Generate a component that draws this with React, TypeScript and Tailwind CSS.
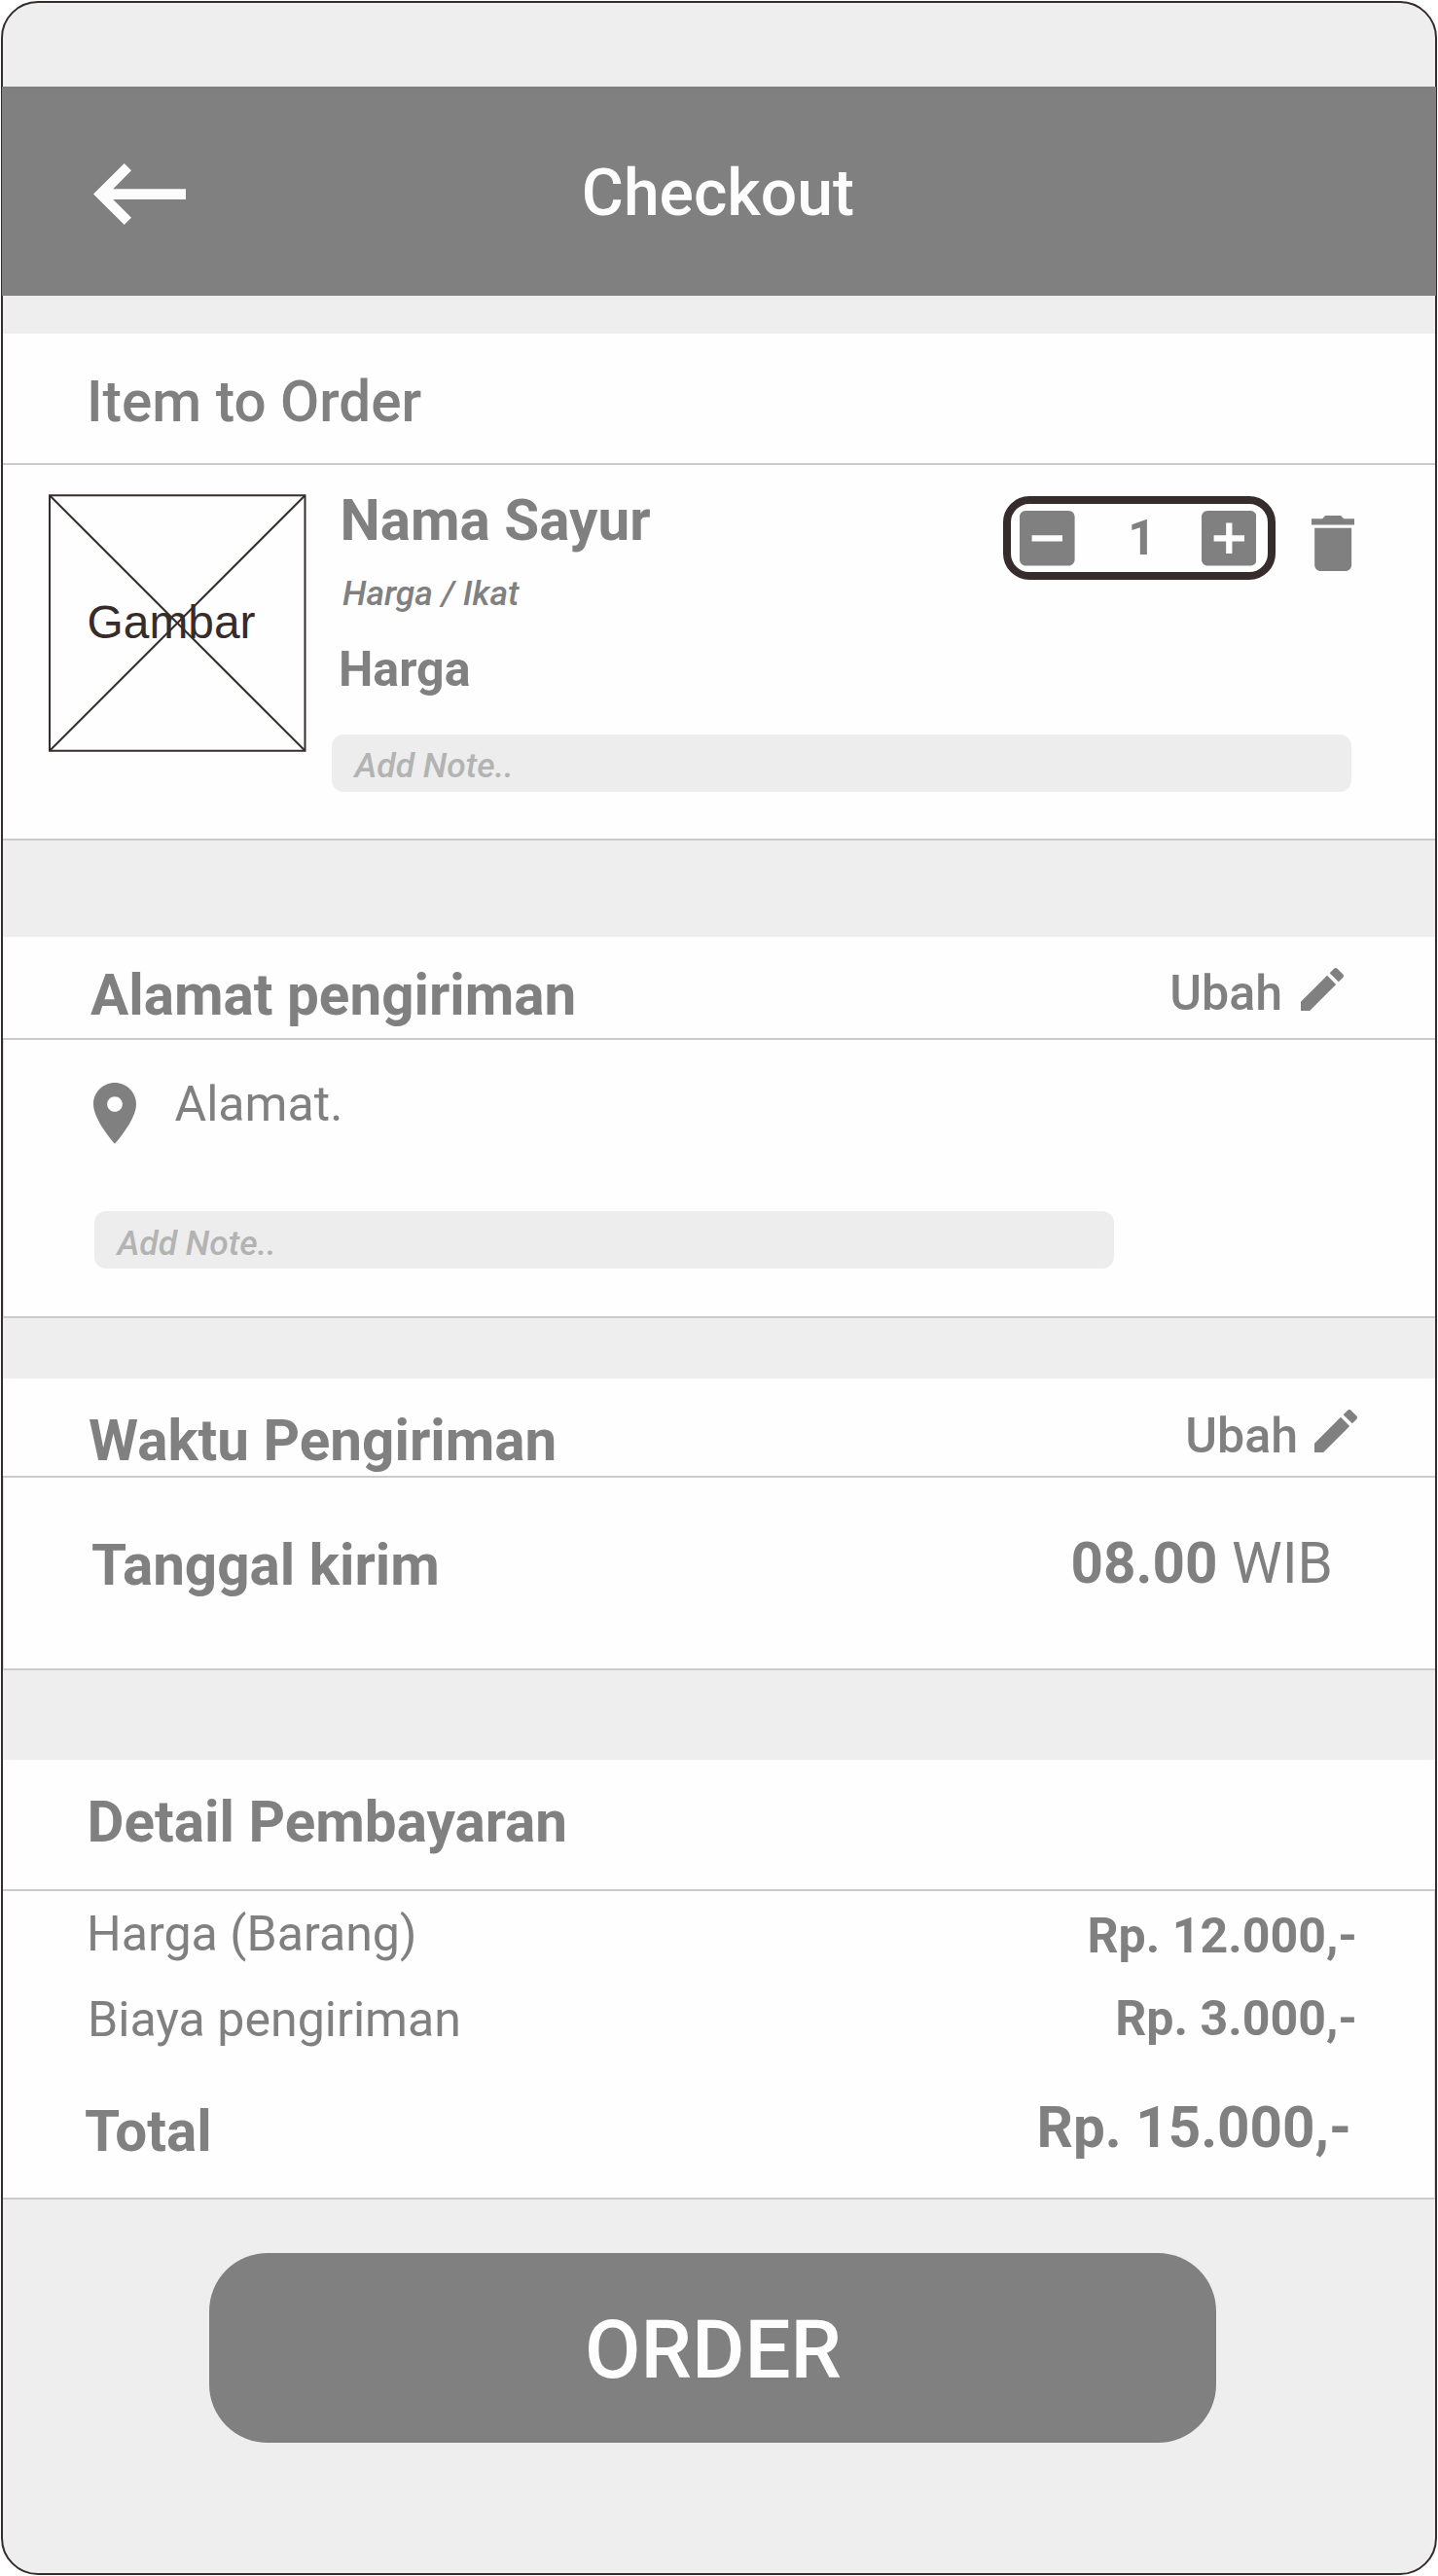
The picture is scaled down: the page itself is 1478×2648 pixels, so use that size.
import type { ReactNode } from 'react';

function Icon({ d, box, className }: { d: string; box: string; className: string }) {
  return (
    <svg viewBox={box} className={`block shrink-0 fill-[#808080] ${className}`} aria-hidden="true">
      <path d={d} />
    </svg>
  );
}

const MINUS_BOX =
  'M19 3H5c-1.1 0-2 .9-2 2v14c0 1.1.9 2 2 2h14c1.1 0 2-.9 2-2V5c0-1.1-.9-2-2-2zm-2 10H7v-2h10v2z';
const PLUS_BOX =
  'M19 3H5c-1.1 0-2 .9-2 2v14c0 1.1.9 2 2 2h14c1.1 0 2-.9 2-2V5c0-1.1-.9-2-2-2zm-2 10h-4v4h-2v-4H7v-2h4V7h2v4h4v2z';
const TRASH = 'M6 19c0 1.1.9 2 2 2h8c1.1 0 2-.9 2-2V7H6v12zM19 4h-3.5l-1-1h-5l-1 1H5v2h14V4z';
const PENCIL =
  'M3 17.25V21h3.75L17.81 9.94l-3.75-3.75L3 17.25zM20.71 7.04c.39-.39.39-1.02 0-1.41l-2.34-2.34c-.39-.39-1.02-.39-1.41 0l-1.83 1.83 3.75 3.75 1.83-1.83z';
const PIN =
  'M12 2C8.13 2 5 5.13 5 9c0 5.25 7 13 7 13s7-7.75 7-13c0-3.87-3.13-7-7-7zm0 9.5c-1.38 0-2.5-1.12-2.5-2.5s1.12-2.5 2.5-2.5 2.5 1.12 2.5 2.5-1.12 2.5-2.5 2.5z';

function Title({ children, className = '' }: { children: ReactNode; className?: string }) {
  return <h2 className={`text-[58.4px] leading-[60px] font-bold ${className}`}>{children}</h2>;
}

function Edit({ className }: { className: string }) {
  return (
    <button className={`flex items-start text-[50.1px] leading-[50px] font-medium ${className}`}>
      <span>Ubah</span>
      <Icon d={PENCIL} box="3 3 18 18" className="size-[44px]" />
    </button>
  );
}

function Note({ className }: { className: string }) {
  return (
    <div
      className={`h-[59px] w-[1048px] rounded-[12px] bg-[#ededed] pl-[23.5px] text-[35.5px] leading-[36px] font-medium text-[#b3b3b3] italic ${className}`}
    >
      Add Note..
    </div>
  );
}

export default function App() {
  return (
    <div className="flex h-[2648px] w-[1478px] bg-white p-px font-['Roboto',sans-serif] whitespace-nowrap text-[#808080]">
      <main className="flex w-[1476px] flex-col rounded-[38px] border-2 border-[#352c2b] bg-[#eeeeee]">
        <header className="-mx-px mt-[86px] flex h-[215px] bg-[#808080] pt-[76px] pl-[94px] text-[#fdfdfd]">
          <svg viewBox="0 0 95.3 63" className="mt-[2.7px] h-[63px] w-[95.3px] fill-[#fcfcfc]" aria-label="Back">
            <path d="M0 31.5 31.7 0 39 7.3 20.2 26.2H95.3V37H20.2L39 55.8 31.7 63Z" />
          </svg>
          <h1 className="ml-[406.5px] text-[66px] leading-[67px] font-medium">Checkout</h1>
        </header>

        <section className="mt-[39px] bg-[#fefefe]">
          <div className="h-[135px] border-b-2 border-[#cbcbcb] pt-10 pl-[86px]">
            <h2 className="text-[58.4px] leading-[60px] font-medium">Item to Order</h2>
          </div>
          <div className="flex h-[386px] border-b-2 border-[#cbcbcb] pl-[47px]">
            <div className="relative mt-[30px] h-[265px] w-[264.5px] shrink-0 text-[#352c2b]">
              <svg viewBox="0 0 265 265" className="absolute inset-0 size-full fill-none stroke-current stroke-2">
                <rect x="1" y="1" width="263" height="263" />
                <path d="M1 1 264 264M264 1 1 264" />
              </svg>
              <p className="pt-[104.5px] pl-[39.5px] font-['Liberation_Sans',sans-serif] text-[47.9px] leading-[54px]">
                Gambar
              </p>
            </div>
            <div className="ml-[26.5px] w-[1048.5px] pt-[27px]">
              <div className="-mr-[2.3px] flex items-start">
                <div className="flex-1">
                  <Title className="pl-[8.5px]">Nama Sayur</Title>
                  <p className="mt-[27px] pl-[11px] text-[35.5px] leading-[36px] font-medium italic">
                    Harga / Ikat
                  </p>
                  <p className="mt-[35px] pl-[7px] text-[50.1px] leading-[50px] font-bold">Harga</p>
                </div>
                <div className="mt-[5px] flex h-[85.5px] w-[280px] items-center rounded-[27px] border-8 border-[#352c2b] pr-[12px] pl-[9px]">
                  <Icon d={MINUS_BOX} box="3 3 18 18" className="mt-[1px] size-[56.6px]" />
                  <span className="flex-1 pl-[8px] text-center text-[50.1px] leading-[50px] font-bold">1</span>
                  <Icon d={PLUS_BOX} box="3 3 18 18" className="mt-[1px] size-[56.6px]" />
                </div>
                <Icon d={TRASH} box="5 3 14 18" className="mt-[25px] ml-[36.3px] h-[57px] w-[44.3px]" />
              </div>
              <Note className="mt-[42px] pt-[14px]" />
            </div>
          </div>
        </section>

        <section className="mt-[99px] bg-[#fefefe]">
          <div className="flex h-[106px] justify-between border-b-2 border-[#cbcbcb] pt-[30px] pr-[94px] pl-[90px]">
            <Title>Alamat pengiriman</Title>
            <Edit className="mt-[3px] gap-[19px] [&>svg]:-mt-px" />
          </div>
          <div className="h-[286px] border-b-2 border-l border-b-[#cbcbcb] border-l-[#dcdcdc] pl-[92px]">
            <div className="flex items-start pt-[41px]">
              <Icon d={PIN} box="5 2 14 20" className="mt-[2.8px] h-[62.9px] w-[44px]" />
              <p className="ml-[39.5px] text-[50.1px] leading-[50px]">Alamat.</p>
            </div>
            <Note className="mt-[69px] ml-px pt-[15px]" />
          </div>
        </section>

        <section className="mt-[62px] bg-[#fefefe]">
          <div className="flex h-[102px] justify-between border-b-2 border-[#cbcbcb] pt-[34px] pr-[80px] pl-[88px]">
            <Title>Waktu Pengiriman</Title>
            <Edit className="gap-[17px] [&>svg]:-mt-[2px]" />
          </div>
          <div className="flex h-[198px] justify-between border-b-2 border-l border-b-[#cbcbcb] border-l-[#dcdcdc] pt-[58px] pr-[105px] pl-[90px]">
            <Title className="mt-[2px]">Tanggal kirim</Title>
            <p className="text-[58.4px] leading-[60px] font-bold">
              08.00 <span className="font-normal">WIB</span>
            </p>
          </div>
        </section>

        <section className="mt-[92px] bg-[#fefefe]">
          <div className="h-[135px] border-b-2 border-[#cbcbcb] pt-[34px] pl-[86.5px]">
            <Title>Detail Pembayaran</Title>
          </div>
          <div className="h-[317px] border-r border-b-2 border-r-[#dcdcdc] border-b-[#cbcbcb] pt-[19px] pr-[79px] pl-[86px] text-[50.1px] leading-[50px]">
            <div className="flex justify-between">
              <span>Harga (Barang)</span>
              <span className="mt-[2px] -mb-[2px] font-bold">Rp. 12.000,-</span>
            </div>
            <div className="mt-[38px] flex justify-between pl-px">
              <span>Biaya pengiriman</span>
              <span className="-mt-px font-bold">Rp. 3.000,-</span>
            </div>
            <div className="mt-[60px] flex justify-between pr-[6px] text-[58.4px] leading-[60px] font-bold">
              <span className="-ml-[2px]">Total</span>
              <span className="-mt-[4px]">Rp. 15.000,-</span>
            </div>
          </div>
        </section>

        <button className="mt-[55px] ml-[212px] flex h-[195px] w-[1035px] items-start rounded-[60px] bg-[#808080] pt-[58px] pl-[386px] text-[83.4px] leading-[83px] font-medium text-[#fdfdfd]">
          ORDER
        </button>
      </main>
    </div>
  );
}
